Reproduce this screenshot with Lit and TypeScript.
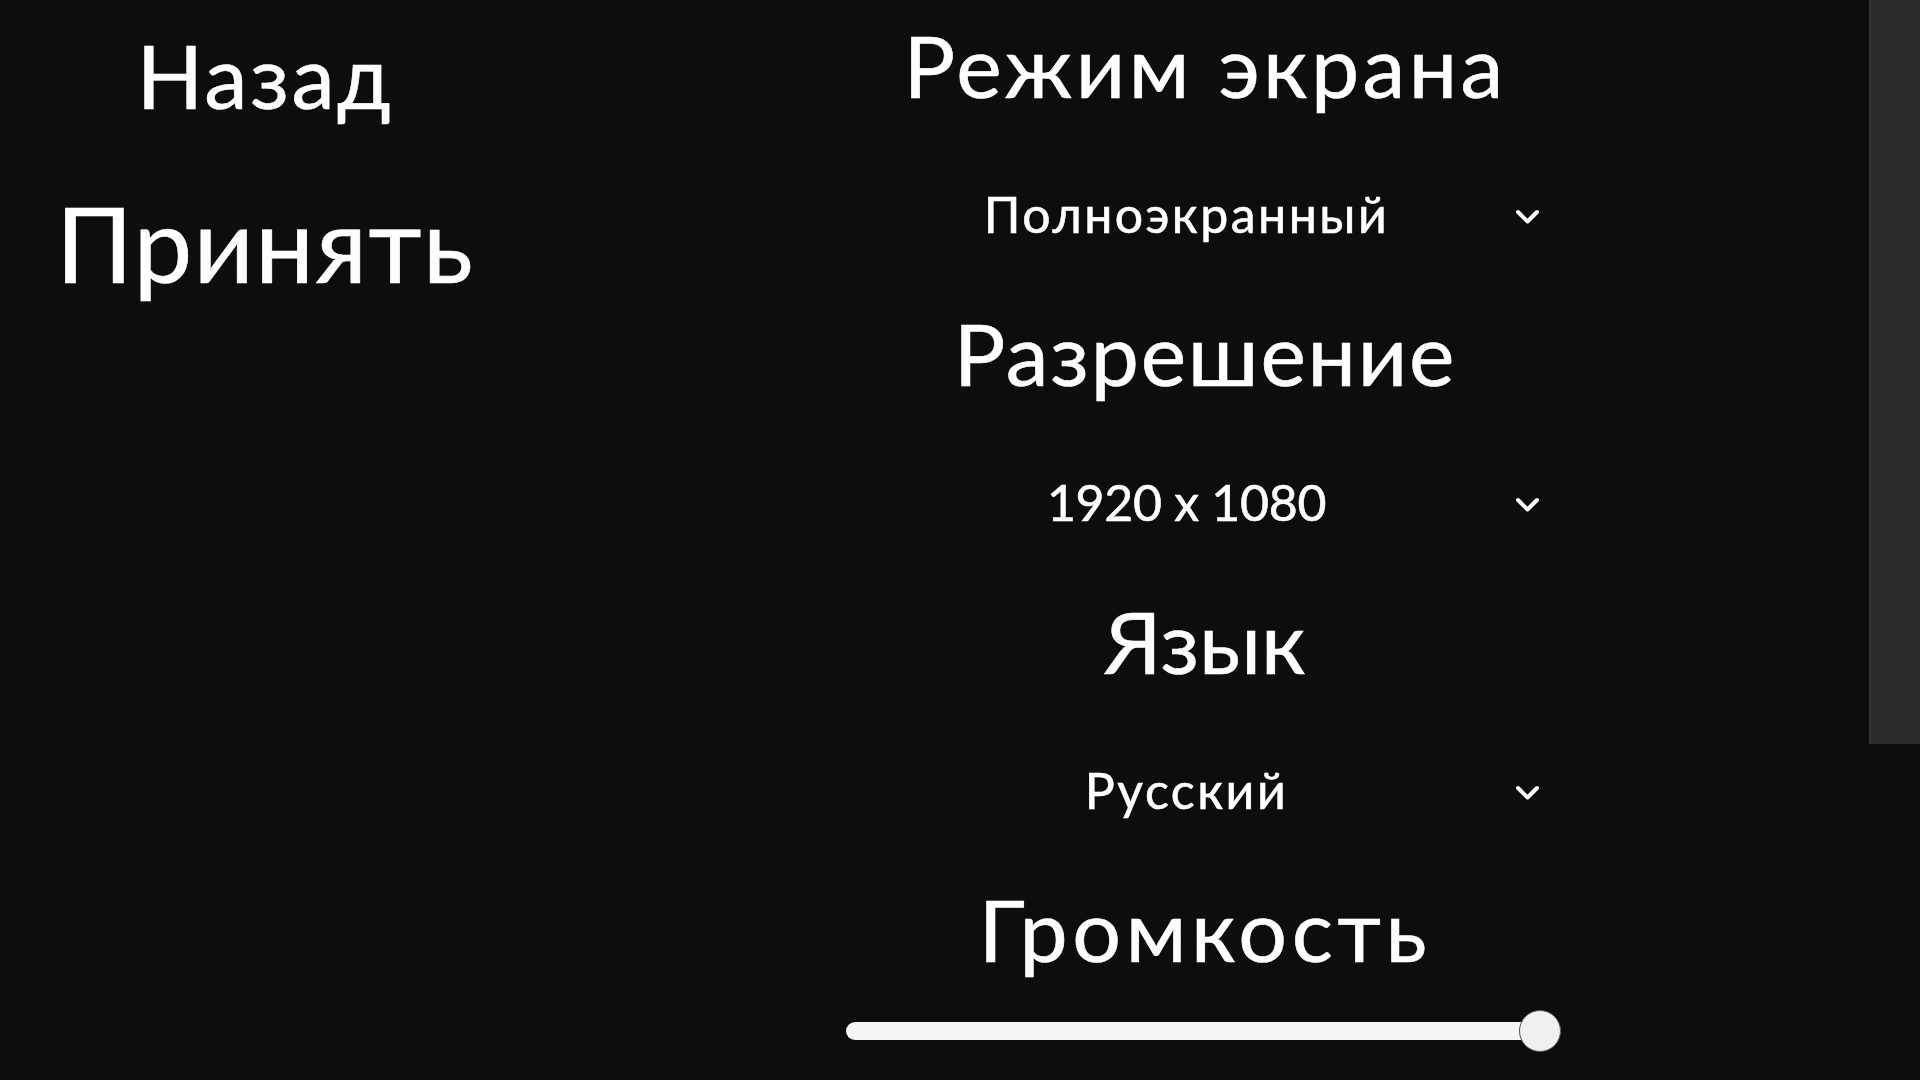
import { LitElement, html, css } from "lit";
import { customElement } from "lit/decorators.js";

const chevron = html`<svg class="chev" viewBox="0 0 25 16" width="25" height="16" aria-hidden="true"><path d="M3 3 L12.5 12.5 L22 3" fill="none" stroke="#fff" stroke-width="4" stroke-linecap="round" stroke-linejoin="round"/></svg>`;

@customElement("app-root")
export class AppRoot extends LitElement {
  static styles = css`
    :host {
      display: flex;
      width: 1920px;
      height: 1080px;
      overflow: hidden;
      background: #0d0d0d;
      color: #fff;
      font-family: "Lato", "Noto Sans", sans-serif;
      -webkit-text-stroke: 0.6px #fff;
    }
    .left {
      width: 530px;
      flex: none;
      padding-top: 16px;
      display: flex;
      flex-direction: column;
      align-items: center;
      box-sizing: border-box;
    }
    .back {
      font-size: 87px;
      line-height: 120px;
      letter-spacing: 2.4px;
    }
    .accept {
      font-size: 105px;
      line-height: 140px;
      margin-top: 36px;
      letter-spacing: 1.2px;
    }
    .main {
      width: 713px;
      flex: none;
      margin-left: 317px;
      padding-top: 5px;
      box-sizing: border-box;
    }
    .section + .section {
      margin-top: 39px;
    }
    .title {
      font-size: 86px;
      line-height: 120px;
      text-align: center;
      padding-left: 3px;
    }
    .s-screen .title { letter-spacing: 3.4px; }
    .s-res .title { letter-spacing: 1.8px; }
    .s-lang .title { letter-spacing: 0; }
    .s-vol .title { letter-spacing: 4.6px; }
    .select {
      position: relative;
      height: 80px;
      margin-top: 49px;
      padding-right: 34px;
      box-sizing: border-box;
      font-size: 50px;
      line-height: 80px;
      text-align: center;
      letter-spacing: 2.5px;
    }
    .s-res .select { letter-spacing: -0.3px; }
    .chev {
      position: absolute;
      left: 668px;
      top: 35px;
    }
    .range {
      display: block;
      width: 715px;
      height: 42px;
      margin: 21px 0 0 -1px;
      padding: 0;
      appearance: none;
      -webkit-appearance: none;
      background: transparent;
    }
    .range::-webkit-slider-runnable-track {
      height: 18px;
      border-radius: 9px;
      background: #f5f5f5;
    }
    .range::-webkit-slider-thumb {
      -webkit-appearance: none;
      width: 42px;
      height: 42px;
      margin-top: -12px;
      border-radius: 50%;
      box-sizing: border-box;
      background: #f0f0f0;
      border: 1px solid #555;
    }
    .thumb-bar {
      width: 51px;
      height: 744px;
      flex: none;
      margin-left: auto;
      background: #2b2b2b;
      border-left: 2px solid #333;
      box-sizing: border-box;
    }
  `;

  private sections = [
    { key: "s-screen", title: "Режим экрана", value: "Полноэкранный" },
    { key: "s-res", title: "Разрешение", value: "1920 x 1080" },
    { key: "s-lang", title: "Язык", value: "Русский" },
  ];

  render() {
    return html`
      <div class="left">
        <div class="back">Назад</div>
        <div class="accept">Принять</div>
      </div>
      <div class="main">
        ${this.sections.map(
          (s) => html`<div class="section ${s.key}">
            <div class="title">${s.title}</div>
            <div class="select">${s.value}${chevron}</div>
          </div>`
        )}
        <div class="section s-vol">
          <div class="title">Громкость</div>
          <input class="range" type="range" min="0" max="100" value="100" />
        </div>
      </div>
      <div class="thumb-bar"></div>
    `;
  }
}
